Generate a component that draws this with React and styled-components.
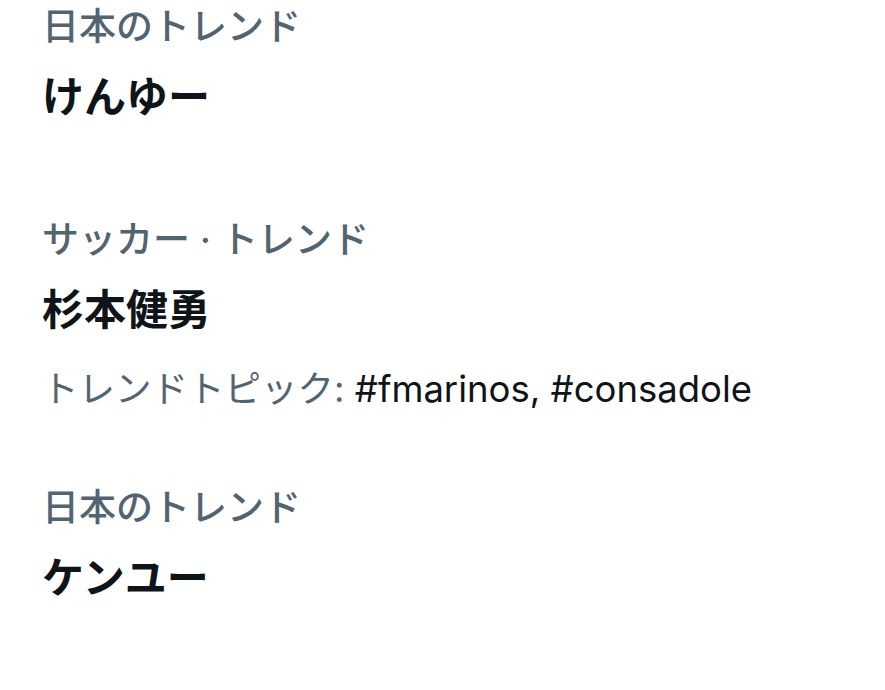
import React from "react";
import styled, { createGlobalStyle } from "styled-components";

const Global = createGlobalStyle`
  html, body { margin: 0; padding: 0; background: #ffffff; }
  body { font-family: Inter, "Noto Sans CJK JP", sans-serif; }
`;

const List = styled.div`
  display: flex;
  flex-direction: column;
  width: 885px;
  height: 690px;
  overflow: hidden;
  background: #fff;
`;

const Item = styled.div`
  display: flex;
  flex-direction: column;
  padding: ${(p) => p.$top}px 42px ${(p) => p.$bottom}px;
`;

const Label = styled.div`
  font-size: 37px;
  line-height: 44px;
  font-weight: 500;
  color: #536471;
  white-space: nowrap;
`;

const Headline = styled.div`
  margin-top: 20px;
  font-size: 42px;
  line-height: 55px;
  font-weight: 700;
  color: #0f1419;
  white-space: nowrap;
`;

const Topics = styled.div`
  margin-top: 30px;
  font-size: 36.5px;
  line-height: 44px;
  font-weight: 400;
  color: #536471;
  white-space: nowrap;
`;

const Tags = styled.span`
  color: #0f1419;
`;

const trends = [
  { label: "日本のトレンド", name: "けんゆー", top: 5, bottom: 47 },
  {
    label: "サッカー · トレンド",
    name: "杉本健勇",
    topics: "#fmarinos, #consadole",
    top: 47,
    bottom: 37,
  },
  { label: "日本のトレンド", name: "ケンユー", top: 38, bottom: 40 },
];

export default function App() {
  return (
    <>
      <Global />
      <List>
        {trends.map((t, i) => (
          <Item key={i} $top={t.top} $bottom={t.bottom}>
            <Label>{t.label}</Label>
            <Headline>{t.name}</Headline>
            {t.topics && (
              <Topics>
                トレンドトピック: <Tags>{t.topics}</Tags>
              </Topics>
            )}
          </Item>
        ))}
      </List>
    </>
  );
}
